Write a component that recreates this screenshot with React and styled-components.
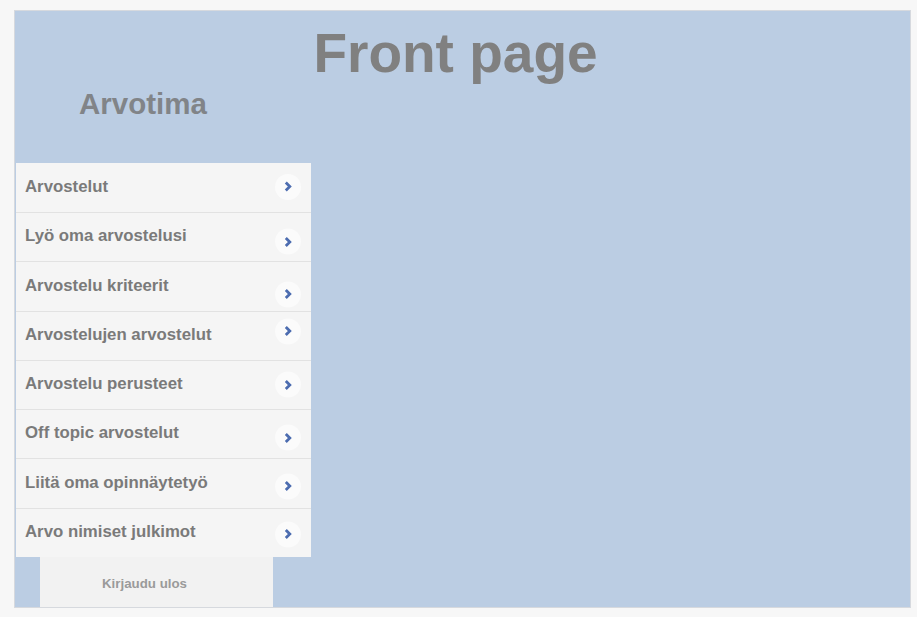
import React from "react";
import styled, { createGlobalStyle } from "styled-components";

const Global = createGlobalStyle`
  html, body { margin: 0; padding: 0; background: #f7f7f7; }
  body { font-family: "Liberation Sans", Arial, sans-serif; }
`;

const Frame = styled.div`
  box-sizing: border-box;
  margin: 10px 0 0 14px;
  width: 897px;
  background: #bbcde3;
  border: 1px solid #d6d9de;
  display: flex;
  flex-direction: column;
`;

const Header = styled.header`
  padding: 15px 14px 0 0;
  text-align: center;
`;

const Title = styled.h1`
  margin: 0;
  font-size: 55px;
  line-height: 55px;
  font-weight: bold;
  color: #808080;
`;

const Body = styled.div`
  display: flex;
`;

const Sidebar = styled.nav`
  width: 296px;
  display: flex;
  flex-direction: column;
`;

const Brand = styled.h2`
  margin: 0;
  padding: 8.2px 0 44.2px 64px;
  font-size: 29.5px;
  line-height: 29.5px;
  font-weight: bold;
  color: #818488;
`;

const Menu = styled.ul`
  list-style: none;
  margin: 0 0 0 1px;
  padding: 0;
  background: #f5f5f5;
`;

const Row = styled.li`
  box-sizing: border-box;
  height: 49.25px;
  display: flex;
  align-items: center;
  justify-content: space-between;
  padding: 0 10px 2px 9px;
  border-top: 1px solid #e2e2e2;
  &:first-child { border-top: none; }
  font-size: 16.8px;
  font-weight: bold;
  color: #7a7a7a;
`;

const Arrow = styled.span`
  width: 26px;
  height: 26px;
  border-radius: 50%;
  background: #fbfbfb;
  display: flex;
  align-items: center;
  justify-content: center;
  transform: translateY(${(p) => p.$nudge}px);
`;

const Logout = styled.button`
  box-sizing: border-box;
  margin-left: 25px;
  width: 233px;
  height: 50px;
  border: none;
  background: #f2f2f2;
  font-family: "Liberation Sans", Arial, sans-serif;
  font-size: 13.3px;
  font-weight: bold;
  color: #9a9a9a;
  padding: 3px 24px 0 0;
`;

const Main = styled.main`
  flex: 1;
`;

const items = [
  ["Arvostelut", 0],
  ["Lyö oma arvostelusi", 5.5],
  ["Arvostelu kriteerit", 8.5],
  ["Arvostelujen arvostelut", -3.5],
  ["Arvostelu perusteet", 0.5],
  ["Off topic arvostelut", 4.5],
  ["Liitä oma opinnäytetyö", 3.5],
  ["Arvo nimiset julkimot", 2.5],
];

const Chevron = () => (
  <svg width="8" height="11" viewBox="0 0 8 11">
    <path d="M1.8 1.5 L5.8 5.5 L1.8 9.5" fill="none" stroke="#4d6db0" strokeWidth="2.8" />
  </svg>
);

export default function App() {
  return (
    <>
      <Global />
      <Frame>
        <Header>
          <Title>Front page</Title>
        </Header>
        <Body>
          <Sidebar>
            <Brand>Arvotima</Brand>
            <Menu>
              {items.map(([label, nudge]) => (
                <Row key={label}>
                  {label}
                  <Arrow $nudge={nudge}>
                    <Chevron />
                  </Arrow>
                </Row>
              ))}
            </Menu>
            <Logout>Kirjaudu ulos</Logout>
          </Sidebar>
          <Main />
        </Body>
      </Frame>
    </>
  );
}
